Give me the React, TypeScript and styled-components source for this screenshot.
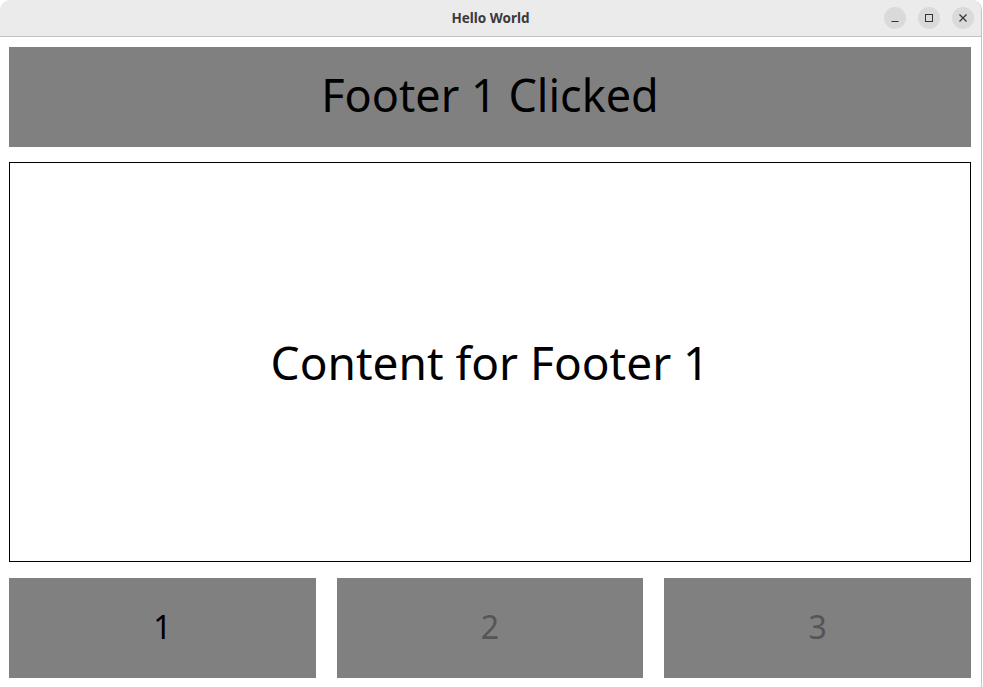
import * as React from 'react'
import styled, { createGlobalStyle } from 'styled-components'

const GlobalStyle = createGlobalStyle`
    html, body {
        margin: 0;
        padding: 0;
        background: #ffffff;
        overflow: hidden;
    }
`

const TABS = [1, 2, 3]

const App = () => {
    const [active, setActive] = React.useState(1)
    return (
        <>
            <GlobalStyle />
            <Window>
                <TitleBar>
                    <Title>Hello World</Title>
                    <Controls>
                        <CtrlButton aria-label="Minimize">
                            <svg width="10" height="10" viewBox="0 0 10 10">
                                <path d="M1.5 8.5h7" stroke="#333" strokeWidth="1" />
                            </svg>
                        </CtrlButton>
                        <CtrlButton aria-label="Maximize">
                            <svg width="10" height="10" viewBox="0 0 10 10">
                                <rect x="1.5" y="1.5" width="7" height="7" fill="none" stroke="#333" strokeWidth="1" />
                            </svg>
                        </CtrlButton>
                        <CtrlButton aria-label="Close">
                            <svg width="10" height="10" viewBox="0 0 10 10">
                                <path d="M1.5 1.5l7 7M8.5 1.5l-7 7" stroke="#333" strokeWidth="1.2" />
                            </svg>
                        </CtrlButton>
                    </Controls>
                </TitleBar>
                <Body>
                    <Header>Footer {active} Clicked</Header>
                    <Content>Content for Footer {active}</Content>
                    <Footer>
                        {TABS.map(n => (
                            <FooterButton key={n} $active={n === active} onClick={() => setActive(n)}>
                                {n}
                            </FooterButton>
                        ))}
                    </Footer>
                </Body>
            </Window>
        </>
    )
}

const Window = styled.div`
    display: flex;
    flex-direction: column;
    width: 981px;
    height: 687px;
    border-right: 1px solid #c4c4c4;
    border-radius: 10px 10px 0 0;
    overflow: hidden;
    background: #ffffff;
    font-family: 'Noto Sans', 'Open Sans', sans-serif;
`

const TitleBar = styled.div`
    position: relative;
    display: flex;
    align-items: center;
    justify-content: center;
    height: 36px;
    flex-shrink: 0;
    background: #ebebeb;
    border-bottom: 1px solid #c2c2c2;
`

const Title = styled.span`
    font-size: 13.5px;
    font-weight: 700;
    color: #3a3a3a;
`

const Controls = styled.div`
    position: absolute;
    right: 7px;
    top: 7px;
    display: flex;
    gap: 12px;
`

const CtrlButton = styled.div`
    display: flex;
    align-items: center;
    justify-content: center;
    width: 22px;
    height: 22px;
    border-radius: 50%;
    background: #dadada;
`

const Body = styled.div`
    display: flex;
    flex-direction: column;
    gap: 15px;
    padding: 10px 10px 0 9px;
`

const Header = styled.div`
    display: flex;
    align-items: center;
    justify-content: center;
    height: 100px;
    box-sizing: border-box;
    padding-bottom: 6px;
    background: #808080;
    color: #000;
    font-size: 45px;
`

const Content = styled.div`
    display: flex;
    align-items: center;
    justify-content: center;
    height: 398px;
    box-sizing: content-box;
    border: 1px solid #000;
    color: #000;
    font-size: 46px;
    line-height: 1;
    span {
        display: block;
    }
`

const Footer = styled.div`
    display: grid;
    grid-template-columns: repeat(3, 1fr);
    column-gap: 21px;
    margin-top: 1px;
`

const FooterButton = styled.div<{ $active: boolean }>`
    display: flex;
    align-items: center;
    justify-content: center;
    height: 100px;
    box-sizing: border-box;
    padding-bottom: 4px;
    background: #808080;
    color: ${p => (p.$active ? '#000' : '#555')};
    font-size: 32px;
    cursor: pointer;
`

export default App
